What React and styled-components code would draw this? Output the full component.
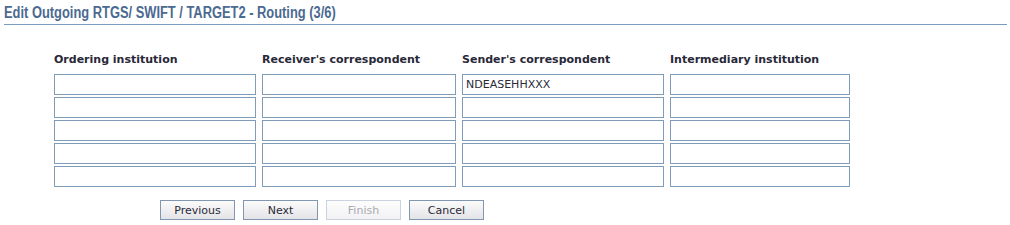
import React from 'react'
import styled, { createGlobalStyle } from 'styled-components'

const GlobalStyle = createGlobalStyle`
  body {
    margin: 0;
    background: #fff;
    font-family: "DejaVu Sans", Verdana, sans-serif;
  }
`

const columns = [
  { title: 'Ordering institution', width: 202, values: ['', '', '', '', ''] },
  { title: "Receiver's correspondent", width: 194, values: ['', '', '', '', ''] },
  { title: "Sender's correspondent", width: 202, values: ['NDEASEHHXXX', '', '', '', ''] },
  { title: 'Intermediary institution', width: 180, values: ['', '', '', '', ''] }
]

export default function App () {
  return (
    <>
      <GlobalStyle />
      <Page>
        <Title>
          <TitleText>Edit Outgoing RTGS/ SWIFT / TARGET2 - Routing (3/6)</TitleText>
        </Title>
        <Form>
          {columns.map(col => (
            <Column key={col.title} $width={col.width}>
              <Label>{col.title}</Label>
              {col.values.map((v, i) => (
                <Field key={i} defaultValue={v} />
              ))}
            </Column>
          ))}
        </Form>
        <Buttons>
          <Button>Previous</Button>
          <Button>Next</Button>
          <Button disabled>Finish</Button>
          <Button>Cancel</Button>
        </Buttons>
      </Page>
    </>
  )
}

const Page = styled.div`
  width: 1010px;
  height: 225px;
  box-sizing: border-box;
  padding: 0 3px 0 4px;
`

const Title = styled.h1`
  margin: 0;
  padding: 4px 0 2px;
  font-family: "Liberation Sans", Arial, sans-serif;
  font-size: 16px;
  line-height: 18px;
  font-weight: bold;
  color: #4b6a91;
  border-bottom: 1px solid #7a9cc0;
  white-space: nowrap;
`

// the original heading uses a narrow face; squeeze the regular one to match
const TitleText = styled.span`
  display: inline-block;
  transform: scaleX(0.805);
  transform-origin: left center;
`

const Form = styled.div`
  display: flex;
  gap: 6px;
  margin: 28px 0 0 50px;
`

const Column = styled.div`
  display: flex;
  flex-direction: column;
  gap: 2px;
  width: ${p => p.$width}px;
`

const Label = styled.div`
  font-size: 11px;
  font-weight: bold;
  line-height: 14px;
  color: #282838;
  margin-bottom: 5px;
  white-space: nowrap;
`

const Field = styled.input`
  box-sizing: border-box;
  width: 100%;
  height: 21px;
  margin: 0;
  padding: 0 3px;
  border: 1px solid #7f9db9;
  font-family: "DejaVu Sans", Verdana, sans-serif;
  font-size: 11px;
  color: #2a2a38;
  background: #fff;
  outline: none;
`

const Buttons = styled.div`
  display: flex;
  gap: 8px;
  margin: 13px 0 0 156px;
`

const Button = styled.button`
  box-sizing: border-box;
  width: 75px;
  height: 20px;
  margin: 0;
  padding: 0;
  font-family: "DejaVu Sans", Verdana, sans-serif;
  font-size: 11px;
  color: #2a2a38;
  border: 1px solid #8196b0;
  background: linear-gradient(#fbfbfb, #e4e4e8);
  &:disabled {
    color: #a9a9b0;
    border-color: #c8d3df;
    background: linear-gradient(#fdfdfd, #f2f2f4);
  }
`
